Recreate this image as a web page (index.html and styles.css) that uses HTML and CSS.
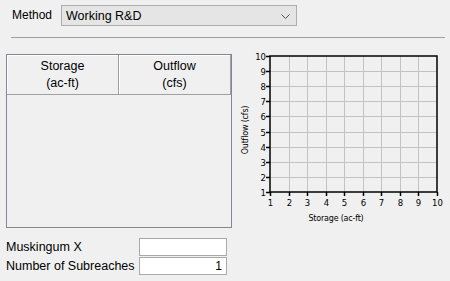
FILE: index.html
```html
<!DOCTYPE html>
<html lang="en">
<head>
    <meta charset="UTF-8" />
    <title>Routing - Working R&amp;D</title>
    <link rel="stylesheet" href="styles.css">
</head>
<body>
    <div class="top">
        <span class="lbl">Method</span>
        <div class="combo">
            <span>Working R&amp;D</span>
            <svg class="chev" width="9" height="5" viewBox="0 0 9 5"><path d="M0.5 0.5 L4.5 4.5 L8.5 0.5" fill="none" stroke="#555" stroke-width="1"/></svg>
        </div>
    </div>
    <div class="sep"></div>

    <div class="main">
        <div class="grid">
            <div class="head">
                <div class="hcell">Storage<br>(ac-ft)</div>
                <div class="hcell">Outflow<br>(cfs)</div>
            </div>
        </div>

        <svg class="chart" width="214" height="190" viewBox="236 45 214 190">
            <g id="gridlines" stroke="#c3c3c3" stroke-width="1"></g>
            <rect x="270" y="56" width="167" height="136" fill="none" stroke="#000" stroke-width="1.5"/>
            <g id="ticks" stroke="#000" stroke-width="1.5"></g>
            <g id="labels" font-family="DejaVu Sans, sans-serif" font-size="8.5" fill="#000"></g>
            <text x="336" y="221" font-family="DejaVu Sans, sans-serif" font-size="8" text-anchor="middle" letter-spacing="-0.2">Storage (ac-ft)</text>
            <text x="248" y="130" font-family="DejaVu Sans, sans-serif" font-size="8" text-anchor="middle" letter-spacing="-0.2" transform="rotate(-90 248 130)">Outflow (cfs)</text>
        </svg>
    </div>

    <div class="params">
        <div class="row">
            <span class="plbl">Muskingum X</span>
            <div class="field"></div>
        </div>
        <div class="row">
            <span class="plbl">Number of Subreaches</span>
            <div class="field">1</div>
        </div>
    </div>

    <script>
        // build the empty 1..10 chart
        const ns = "http://www.w3.org/2000/svg";
        const gl = document.getElementById("gridlines");
        const tk = document.getElementById("ticks");
        const lb = document.getElementById("labels");
        const x0 = 270, x1 = 437, y0 = 192, y1 = 56;

        function line(g, a, b, c, d) {
            let l = document.createElementNS(ns, "line");
            l.setAttribute("x1", a); l.setAttribute("y1", b);
            l.setAttribute("x2", c); l.setAttribute("y2", d);
            g.appendChild(l);
        }
        function label(t, x, y, anchor) {
            let e = document.createElementNS(ns, "text");
            e.setAttribute("x", x); e.setAttribute("y", y);
            e.setAttribute("text-anchor", anchor);
            e.textContent = t;
            lb.appendChild(e);
        }

        for (let i = 0; i < 10; i++) {
            let x = Math.round(x0 + i * (x1 - x0) / 9) + 0.5;
            let y = Math.round(y0 - i * (y0 - y1) / 9) + 0.5;
            if (i > 0 && i < 9) {
                line(gl, x, y1, x, y0);
                line(gl, x0, y, x1, y);
            }
            line(tk, x, y0, x, y0 + 4);
            line(tk, x0 - 4, y, x0, y);
            label(i + 1, x, 206, "middle");
            label(i + 1, x0 - 4, y + 3, "end");
        }
    </script>
</body>
</html>
```

FILE: styles.css
```css
body {
    margin: 0;
    background: #f0f0f0;
    font-family: 'Liberation Sans', Arial, sans-serif;
    font-size: 12px;
    color: #000;
    width: 450px;
    height: 281px;
    overflow: hidden;
}
.top {
    display: flex;
    align-items: flex-start;
    padding: 5px 0 0 12px;
}
.lbl {
    width: 49px;
    padding-top: 3px;
}
.combo {
    box-sizing: border-box;
    width: 236px;
    height: 21px;
    background: #e5e5e5;
    border: 1px solid #adadad;
    display: flex;
    align-items: center;
    justify-content: space-between;
    padding: 0 6px 0 4px;
    font-size: 12.5px;
}
.chev {
    margin-top: 1px;
}
.sep {
    height: 1px;
    background: #a0a0a0;
    margin: 11px 5px 0 11px;
}
.main {
    display: flex;
    align-items: flex-start;
    margin-top: 7px;
}
.grid {
    box-sizing: border-box;
    width: 226px;
    height: 174px;
    margin: 9px 0 0 6px;
    border: 1px solid #828790;
    background: #f0f0f0;
}
.head {
    display: flex;
}
.hcell {
    box-sizing: border-box;
    width: 112px;
    height: 40px;
    text-align: center;
    line-height: 17px;
    padding-top: 3px;
    border-right: 1px solid #a0a0a0;
    border-bottom: 1px solid #a0a0a0;
    box-shadow: inset 1px 1px 0 #fff;
    font-size: 12.5px;
}
.chart {
    display: block;
    margin-left: 4px;
}
.params {
    margin: 3px 0 0 6px;
    display: flex;
    flex-direction: column;
    gap: 1px;
}
.row {
    display: flex;
    align-items: center;
}
.plbl {
    width: 133px;
    font-size: 12.5px;
}
.field {
    box-sizing: border-box;
    width: 88px;
    height: 18px;
    background: #fff;
    border: 1px solid #a9a9a9;
    text-align: right;
    padding-right: 4px;
    line-height: 16px;
    font-size: 12px;
}
```
